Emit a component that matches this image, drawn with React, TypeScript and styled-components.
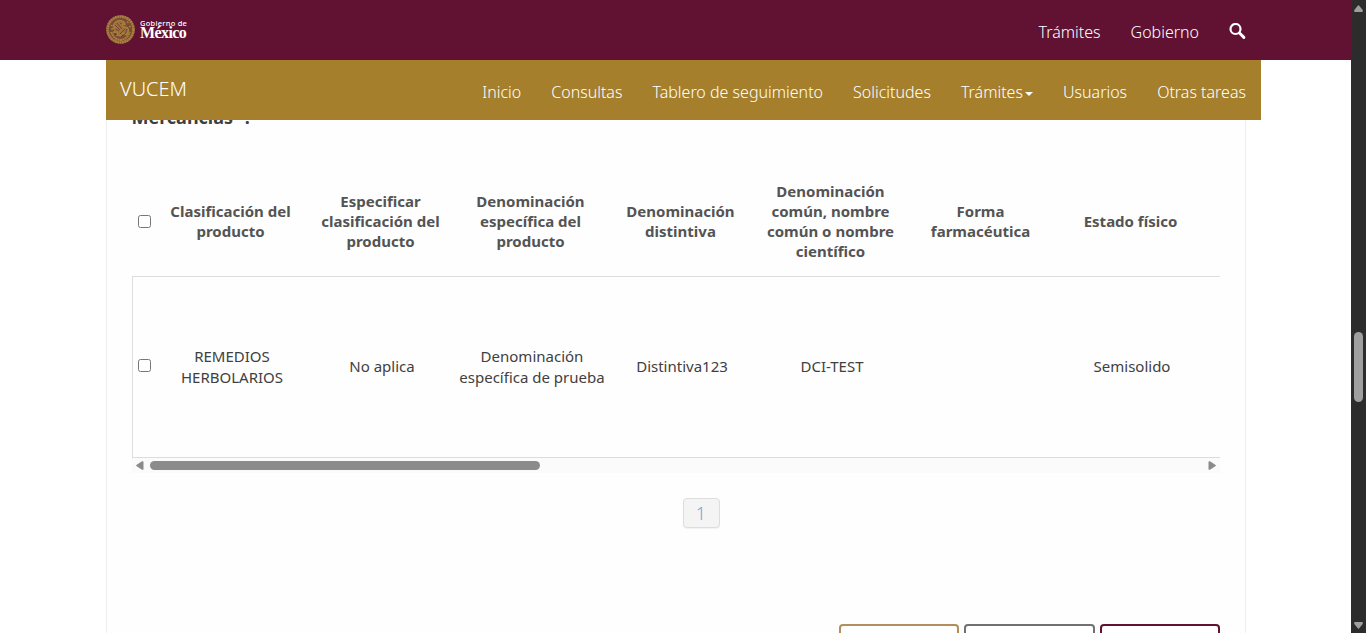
import React from "react";
import styled, { createGlobalStyle } from "styled-components";

const GlobalStyle = createGlobalStyle`
  *, *::before, *::after { box-sizing: border-box; }
  html, body { margin: 0; padding: 0; overflow: hidden; background: #fff; }
  body { font-family: "Noto Sans", "Open Sans", sans-serif; color: #404041; }
`;

const Window = styled.div`
  display: flex;
  width: 1366px;
  height: 633px;
  overflow: hidden;
`;

const Page = styled.div`
  flex: 1;
  min-width: 0;
  display: flex;
  flex-direction: column;
`;

const TopBar = styled.header`
  flex: none;
  height: 60px;
  padding: 0 105px 0 106px;
  background: #611232;
  display: flex;
  justify-content: space-between;
`;

const Brand = styled.a`
  display: flex;
  align-items: flex-start;
  gap: 5px;
  padding-top: 15px;
  color: #fff;
`;

const BrandText = styled.span`
  display: flex;
  flex-direction: column;
  padding-top: 4px;
  width: 48px;
`;

const BrandSmall = styled.span`
  font-size: 7.5px;
  line-height: 9px;
  font-weight: 500;
  letter-spacing: 0.25px;
  white-space: nowrap;
`;

const BrandLarge = styled.span`
  font-family: "Liberation Serif", serif;
  font-size: 16px;
  line-height: 10px;
  font-weight: 700;
  letter-spacing: -0.6px;
`;

const TopLinks = styled.nav`
  display: flex;
  align-items: flex-start;
  gap: 30px;
  padding-top: 20px;
`;

const NavLink = styled.a`
  display: flex;
  align-items: center;
  color: #fff;
  font-size: 16px;
  font-weight: 300;
  line-height: 24px;
  white-space: nowrap;
`;

const SearchIcon = styled.svg`
  display: block;
  width: 17px;
  height: 17px;
  margin-top: 3px;
`;

const SubBar = styled.div`
  flex: none;
  width: 1155px;
  height: 60px;
  margin-left: 106px;
  padding: 0 15px 0 14px;
  background: #a57f2c;
  display: flex;
  justify-content: space-between;
`;

const SubTitle = styled.a`
  padding-top: 16px;
  color: #fff;
  font-size: 20px;
  font-weight: 300;
  line-height: 26px;
`;

const SubLinks = styled.nav`
  display: flex;
  gap: 30px;
  padding-top: 20px;
  height: 44px;
`;

const Caret = styled.span`
  margin: 3px 0 0 2px;
  border-top: 4px solid #fff;
  border-left: 4px solid transparent;
  border-right: 4px solid transparent;
`;

const Content = styled.main`
  flex: 1;
  min-height: 0;
  width: 1140px;
  margin-left: 106px;
  padding: 0 25px;
  border: solid #eee;
  border-width: 0 1px;
  background: #fefefe;
  overflow: hidden;
`;

const SectionLabel = styled.h3`
  margin: -15px 0 0 -0.6px;
  height: 25px;
  font-size: 18px;
  line-height: 25px;
  font-weight: 700;
  color: #404041;
`;

const Required = styled.span`
  margin-right: 2px;
  color: #d0021b;
`;

const TableArea = styled.div`
  width: 1088px;
  margin-top: 37px;
`;

const HeaderRow = styled.div`
  display: flex;
  align-items: center;
  height: 109px;
  padding: 0 0 2px 6px;
`;

const BodyRow = styled.div`
  display: flex;
  align-items: center;
  height: 182px;
  padding: 0 0 0.8px 5px;
  border: solid #ddd;
  border-width: 1px 0 1px 1px;
`;

const Check = styled.input.attrs({ type: "checkbox" })<{ $head?: boolean }>`
  flex: none;
  width: 13px;
  height: 13px;
  margin: ${(p) => (p.$head ? "1px 4.5px 0 0" : "0 6px 3px 0")};
`;

const Cell = styled.div<{ $head?: boolean }>`
  flex: none;
  width: 150px;
  padding: 0 ${(p) => (p.$head ? 10 : 2)}px;
  text-align: center;
  white-space: pre-line;
  font-size: 15px;
  line-height: ${(p) => (p.$head ? 20 : 21)}px;
  font-weight: ${(p) => (p.$head ? 700 : 400)};
  color: ${(p) => (p.$head ? "#545454" : "#404041")};
`;

const HScroll = styled.div`
  display: flex;
  align-items: center;
  height: 15px;
  padding: 0 4px;
  background: #fbfbfb;
`;

const HThumb = styled.div`
  width: 390px;
  height: 9px;
  margin: 0 auto 0 6px;
  border-radius: 5px;
  background: #8b8b8b;
`;

const Arrow = styled.svg`
  display: block;
  flex: none;
`;

const Pager = styled.div`
  display: flex;
  justify-content: center;
  margin-top: 25px;
  padding-left: 51px;
  padding-right: 1px;
  width: 1088px;
`;

const PageButton = styled.button`
  width: 37px;
  height: 30px;
  padding: 0;
  border: 1px solid #ddd;
  border-radius: 4px;
  background: #f4f4f4;
  box-shadow: 0 1px 1px rgba(0, 0, 0, 0.05);
  color: #7f9fd0;
  font-family: inherit;
  font-size: 18px;
  font-weight: 300;
  line-height: 28px;
`;

const Actions = styled.div`
  display: flex;
  justify-content: flex-end;
  gap: 5px;
  width: 1088px;
  margin-top: 96px;
`;

const ActionButton = styled.button<{ $color: string; $width: number }>`
  width: ${(p) => p.$width}px;
  height: 40px;
  border: 2px solid ${(p) => p.$color};
  border-radius: 4px;
  background: #fff;
`;

const VScroll = styled.div`
  flex: none;
  width: 15px;
  display: flex;
  flex-direction: column;
  align-items: center;
  padding: 5px 0 4px;
  background: #2c2c2c;
`;

const VThumb = styled.div`
  width: 9px;
  height: 70px;
  margin: 320px 0 auto;
  border-radius: 5px;
  background: #9f9f9f;
`;

const columns = [
  { title: "Clasificación del producto", value: "REMEDIOS\nHERBOLARIOS" },
  { title: "Especificar clasificación del producto", value: "No aplica" },
  { title: "Denominación específica del producto", value: "Denominación\nespecífica de prueba" },
  { title: "Denominación distintiva", value: "Distintiva123" },
  { title: "Denominación común, nombre común o nombre científico", value: "DCI-TEST" },
  { title: "Forma farmacéutica", value: "" },
  { title: "Estado físico", value: "Semisolido" },
];

function Seal() {
  return (
    <svg width="29" height="29" viewBox="0 0 29 29" fill="none" stroke="#a7823f">
      <circle cx="14.5" cy="14.5" r="14" fill="#7c4a35" stroke="none" />
      <circle cx="14.5" cy="14.5" r="13" strokeWidth="2.600" strokeDasharray="2 .4" />
      <path d="M5.2 17c2 5.5 6 8 9.3 8s7.400-2.600 9.300-8" strokeWidth="2" strokeDasharray="2 .5" />
      <path d="M7 11c1-4 5-6.500 8-5.500 3 .8 4.500 2.500 4 4.500l-3-1.500 1 3 4.500 1c1.500 2 1 5-1 7.500l-3-2-3 3-4-1 1-3-4 .5 2-3-3-1 3-1z" fill="#a7823f" fillOpacity=".75" strokeWidth="1.200" />
      <path d="M9 10l5 5M11 8l5 6M14 19l5-5M19 19l2-5M9 14l4 2M14 8l2 1M8 20l3-1M15 22l2-2" stroke="#6c2a35" strokeWidth=".7" />
      <path d="M4.500 10l2 1M21 6.500l1.500 1.500M23 12l2-1M5 14h2" strokeWidth="1.200" />
    </svg>
  );
}

export default function App() {
  return (
    <Window>
      <GlobalStyle />
      <Page>
        <TopBar>
          <Brand>
            <Seal />
            <BrandText>
              <BrandSmall>Gobierno de</BrandSmall>
              <BrandLarge>México</BrandLarge>
            </BrandText>
          </Brand>
          <TopLinks>
            <NavLink>Trámites</NavLink>
            <NavLink>Gobierno</NavLink>
            <SearchIcon viewBox="0 0 17 17" fill="none" stroke="#fff">
              <circle cx="6.500" cy="6" r="5" strokeWidth="2.200" />
              <path d="M10.500 10l4.400 4.400" strokeWidth="2.900" strokeLinecap="round" />
            </SearchIcon>
          </TopLinks>
        </TopBar>
        <SubBar>
          <SubTitle>VUCEM</SubTitle>
          <SubLinks>
            <NavLink>Inicio</NavLink>
            <NavLink>Consultas</NavLink>
            <NavLink>Tablero de seguimiento</NavLink>
            <NavLink>Solicitudes</NavLink>
            <NavLink>
              Trámites
              <Caret />
            </NavLink>
            <NavLink>Usuarios</NavLink>
            <NavLink>Otras tareas</NavLink>
          </SubLinks>
        </SubBar>
        <Content>
          <SectionLabel>
            Mercancías<Required>*</Required>:
          </SectionLabel>
          <TableArea>
            <HeaderRow>
              <Check $head />
              {columns.map((c) => (
                <Cell key={c.title} $head>
                  {c.title}
                </Cell>
              ))}
            </HeaderRow>
            <BodyRow>
              <Check />
              {columns.map((c) => (
                <Cell key={c.title}>{c.value}</Cell>
              ))}
            </BodyRow>
            <HScroll>
              <Arrow width="8" height="9" viewBox="0 0 8 9" fill="#8b8b8b">
                <path d="M.4 4 6 .3Q7.500-.2 7.500 1v7q0 1.200-1.500.7L.4 5Q-.1 4.500.4 4z" />
              </Arrow>
              <HThumb />
              <Arrow width="8" height="9" viewBox="0 0 8 9" fill="#8b8b8b">
                <path d="M7.600 4 2 .3Q.5-.2.5 1v7q0 1.200 1.500.7L7.600 5q.5-.5 0-1z" />
              </Arrow>
            </HScroll>
          </TableArea>
          <Pager>
            <PageButton>1</PageButton>
          </Pager>
          <Actions>
            <ActionButton $color="#b38e5d" $width={120} />
            <ActionButton $color="#6f7271" $width={131} />
            <ActionButton $color="#611232" $width={120} />
          </Actions>
        </Content>
      </Page>
      <VScroll>
        <Arrow width="9" height="7" viewBox="0 0 9 7" fill="#9f9f9f">
          <path d="M4 .4.300 5Q-.2 7 1 7h7q1.200 0 .7-2L5 .4Q4.500-.1 4 .4z" />
        </Arrow>
        <VThumb />
        <Arrow width="9" height="7" viewBox="0 0 9 7" fill="#9f9f9f">
          <path d="M4 6.600.300 2Q-.2 0 1 0h7q1.200 0 .7 2L5 6.600q-.5.5-1 0z" />
        </Arrow>
      </VScroll>
    </Window>
  );
}
